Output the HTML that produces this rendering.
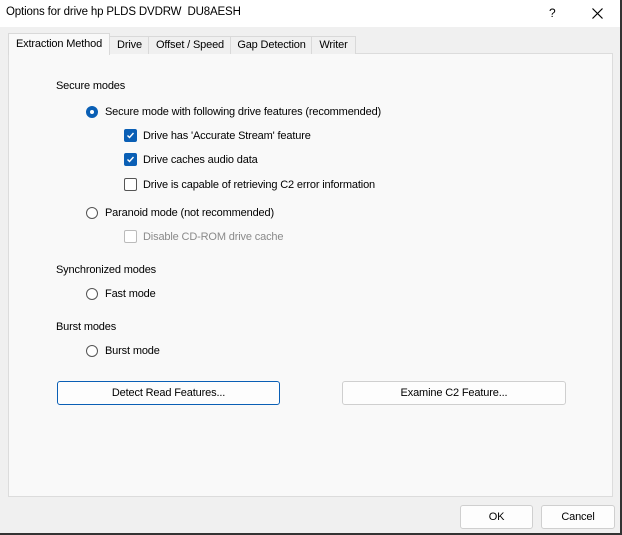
<html><head><style>
body{margin:0;width:622px;height:535px;background:#f0f0f0;font-family:"Liberation Sans",sans-serif;font-size:11px;letter-spacing:-0.15px;color:#000;position:relative;overflow:hidden}
.a{position:absolute;white-space:nowrap}
.tb{position:absolute;left:0;top:0;width:622px;height:27px;background:#fff}
.panel{position:absolute;left:8px;top:53px;width:603px;height:442px;background:#f9f9f9;border:1px solid #dcdcdc}
.tab{position:absolute;top:36px;height:17px;border:1px solid #d9d9d9;border-bottom:none;background:#f0f0f0;line-height:17px;text-align:center}
.rad{position:absolute;width:10px;height:10px;border:1px solid #555;border-radius:50%;background:#fff}
.rad.on{border:4px solid #0a5fb5;width:4px;height:4px}
.cb{position:absolute;width:11px;height:11px;border:1px solid #555;border-radius:2px;background:#fff}
.cb.on{background:#0a5fb5;border-color:#0a5fb5}
.btn{position:absolute;height:22px;border:1px solid #cfcfcf;border-radius:3px;background:#fdfdfd;text-align:center;line-height:22px}
</style></head><body>
<div class="tb"></div>
<div class="a" style="left:6px;top:6px;font-size:11.5px">Options for drive hp PLDS DVDRW&nbsp; DU8AESH</div>
<div class="a" style="left:549px;top:6px;font-size:12px">?</div>
<svg class="a" style="left:592px;top:8px" width="11" height="11"><path d="M0.5 0.5L10.5 10.5M10.5 0.5L0.5 10.5" stroke="#000" stroke-width="1.2"/></svg>
<div class="panel"></div>
<div class="tab" style="left:109px;width:39px">Drive</div>
<div class="tab" style="left:148px;width:82px">Offset / Speed</div>
<div class="tab" style="left:230px;width:81px">Gap Detection</div>
<div class="tab" style="left:311px;width:43px">Writer</div>
<div class="tab" style="left:8px;top:33px;width:100px;height:21px;background:#f9f9f9;line-height:20px">Extraction Method</div>
<div class="a" style="left:56px;top:80px">Secure modes</div>
<div class="rad on" style="left:86px;top:106px"></div>
<div class="a" style="left:105px;top:106px">Secure mode with following drive features (recommended)</div>
<div class="cb on" style="left:124px;top:129px"></div><svg class="a" style="left:125px;top:130px" width="11" height="11"><path d="M2.5 5.5L4.5 7.5L8.5 3" stroke="#fff" stroke-width="1.4" fill="none"/></svg>
<div class="a" style="left:143px;top:130px">Drive has 'Accurate Stream' feature</div>
<div class="cb on" style="left:124px;top:153px"></div><svg class="a" style="left:125px;top:154px" width="11" height="11"><path d="M2.5 5.5L4.5 7.5L8.5 3" stroke="#fff" stroke-width="1.4" fill="none"/></svg>
<div class="a" style="left:143px;top:154px">Drive caches audio data</div>
<div class="cb" style="left:124px;top:178px"></div>
<div class="a" style="left:143px;top:179px">Drive is capable of retrieving C2 error information</div>
<div class="rad" style="left:86px;top:207px"></div>
<div class="a" style="left:105px;top:207px">Paranoid mode (not recommended)</div>
<div class="cb" style="left:124px;top:230px;border-color:#bbb"></div>
<div class="a" style="left:143px;top:231px;color:#8a8a8a">Disable CD-ROM drive cache</div>
<div class="a" style="left:56px;top:264px">Synchronized modes</div>
<div class="rad" style="left:86px;top:288px"></div>
<div class="a" style="left:105px;top:288px">Fast mode</div>
<div class="a" style="left:56px;top:321px">Burst modes</div>
<div class="rad" style="left:86px;top:345px"></div>
<div class="a" style="left:105px;top:345px">Burst mode</div>
<div class="btn" style="left:57px;top:381px;width:221px;border-color:#0a5fb5">Detect Read Features...</div>
<div class="btn" style="left:342px;top:381px;width:222px">Examine C2 Feature...</div>
<div class="btn" style="left:460px;top:505px;width:71px">OK</div>
<div class="btn" style="left:541px;top:505px;width:72px">Cancel</div>
<div class="a" style="left:620px;top:0;width:2px;height:535px;background:#333"></div>
<div class="a" style="left:0;top:533px;width:622px;height:2px;background:#333"></div>
</body></html>
